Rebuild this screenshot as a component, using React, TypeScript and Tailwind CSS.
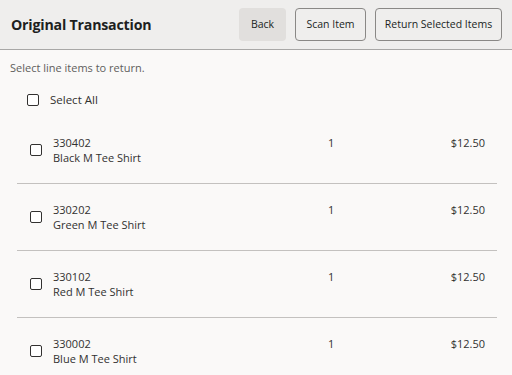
import React from "react";

const items = [
  { id: "330402", name: "Black M Tee Shirt" },
  { id: "330202", name: "Green M Tee Shirt" },
  { id: "330102", name: "Red M Tee Shirt" },
  { id: "330002", name: "Blue M Tee Shirt" },
];

function Box() {
  return <div className="w-[12px] h-[12px] border-[1.5px] border-[#323130] rounded-[2px] bg-white shrink-0" />;
}

export default function App() {
  return (
    <div className="w-[512px] h-[375px] overflow-hidden bg-[#faf9f8] text-[#323130]" style={{ fontFamily: '"Open Sans", "Noto Sans", sans-serif' }}>
      <div className="h-[50px] bg-[#efeeed] border-b border-[#a8a7a6] flex items-center justify-between pl-[11px] pr-[10px]">
        <div className="text-[14.2px] font-bold text-[#201f1e] tracking-[-0.2px]">Original Transaction</div>
        <div className="flex items-center gap-[9px] text-[10.5px] text-[#201f1e]">
          <button className="h-[33px] w-[47px] rounded-[4px] bg-[#e1dfdd]">Back</button>
          <button className="h-[33px] w-[71px] rounded-[4px] border border-[#8a8886]">Scan Item</button>
          <button className="h-[33px] w-[127px] rounded-[4px] border border-[#8a8886]">Return Selected Items</button>
        </div>
      </div>
      <div className="pl-[10px] pt-[10px] text-[11px] leading-[15px] text-[#605e5c]">Select line items to return.</div>
      <div className="h-[34px] mt-[8px] pl-[27px] flex items-center gap-[11px] text-[11.5px]">
        <Box />
        <span>Select All</span>
      </div>
      <div className="mx-[17px] w-[480px]">
        {items.map((it, i) => (
          <div key={it.id} className={`flex items-start pl-[13px] pr-[12px] pt-[18px] pb-[18px] ${i < 3 ? "border-b border-[#c3c1bf]" : ""}`}>
            <div className="mt-[9px]"><Box /></div>
            <div className="ml-[11px] w-[275px] text-[11px] leading-[15px]">
              <div>{it.id}</div>
              <div>{it.name}</div>
            </div>
            <div className="flex-1 text-[11px] leading-[15px]">1</div>
            <div className="text-[11px] leading-[15px]">$12.50</div>
          </div>
        ))}
      </div>
    </div>
  );
}
